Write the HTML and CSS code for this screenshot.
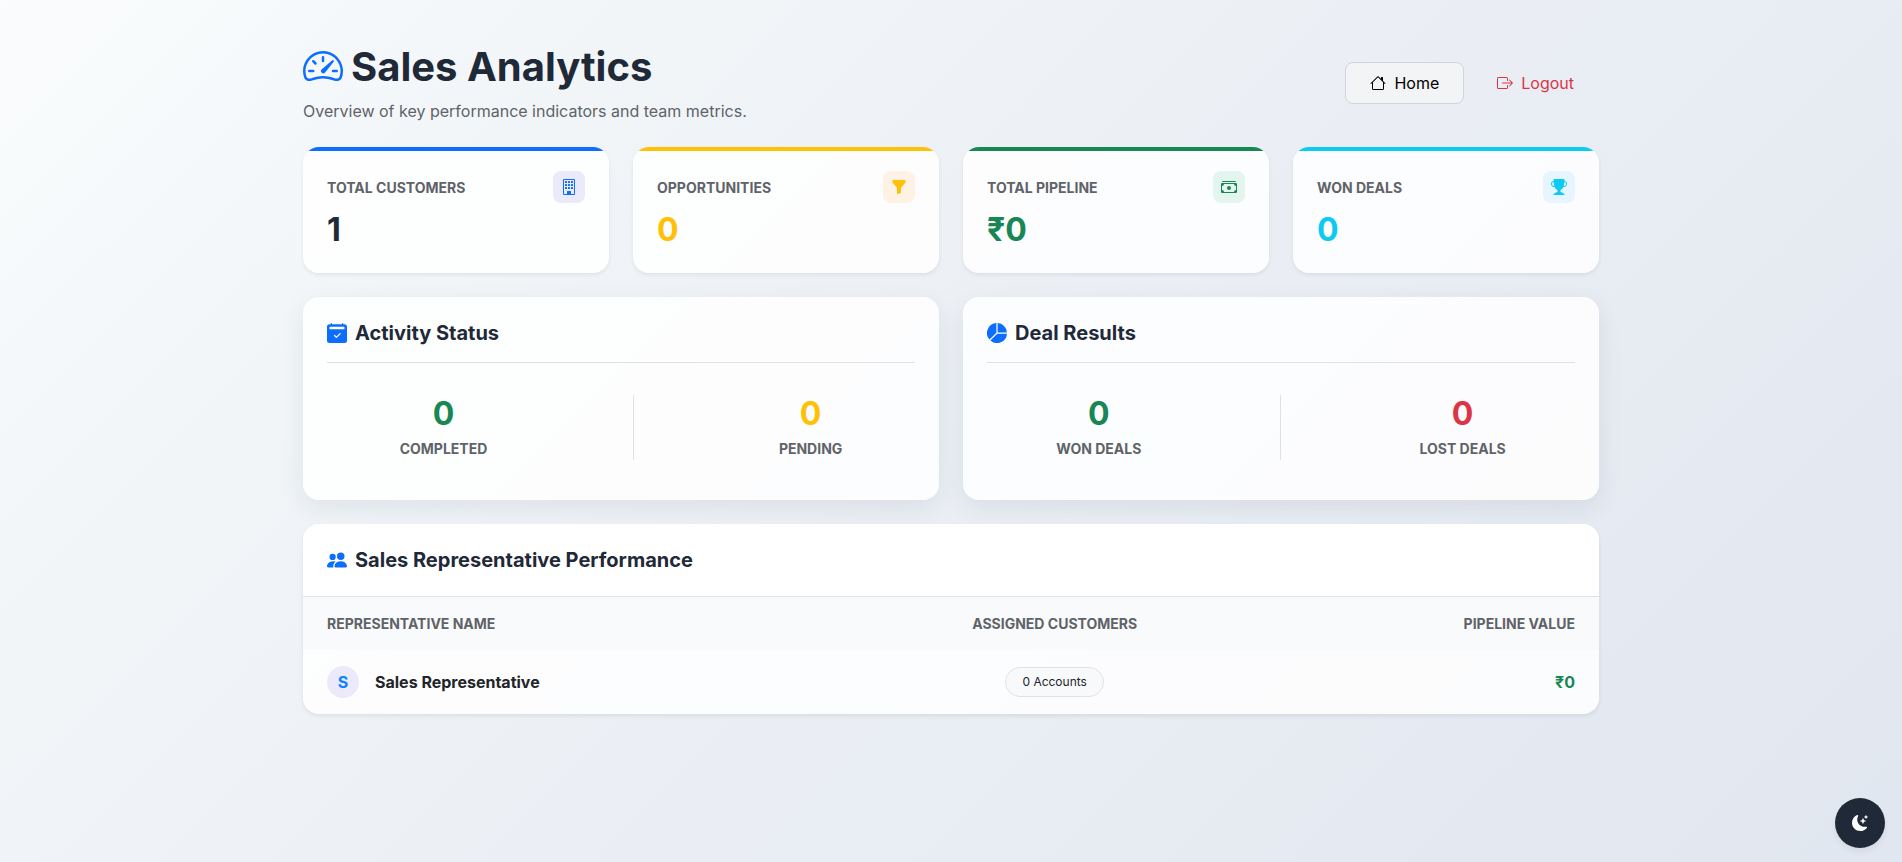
FILE: index.html
```html
<!DOCTYPE html>
<html lang="en">
<head>
<meta charset="utf-8">
<meta name="viewport" content="width=device-width, initial-scale=1">
<title>Sales Analytics</title>
<link rel="stylesheet" href="styles.css">
</head>
<body>
<main class="container">
  <header class="page-header">
    <div>
      <h1 class="page-title"><svg class="icon text-primary" viewBox="0 0 16 16" aria-hidden="true"><path d="M8 4a.5.5 0 0 1 .5.5V6a.5.5 0 0 1-1 0V4.5A.5.5 0 0 1 8 4M3.732 5.732a.5.5 0 0 1 .707 0l.915.914a.5.5 0 1 1-.708.708l-.914-.915a.5.5 0 0 1 0-.707M2 10a.5.5 0 0 1 .5-.5h1.586a.5.5 0 0 1 0 1H2.5A.5.5 0 0 1 2 10m9.5 0a.5.5 0 0 1 .5-.5h1.5a.5.5 0 0 1 0 1H12a.5.5 0 0 1-.5-.5m.754-4.246a.39.39 0 0 0-.527-.02L7.547 9.31a.91.91 0 1 0 1.302 1.258l3.434-4.297a.39.39 0 0 0-.029-.518z"/><path fill-rule="evenodd" d="M0 10a8 8 0 1 1 15.547 2.661c-.442 1.253-1.845 1.602-2.932 1.25C11.309 13.488 9.475 13 8 13c-1.474 0-3.31.488-4.615.911-1.087.352-2.49.003-2.932-1.25A8 8 0 0 1 0 10m8-7a7 7 0 0 0-6.603 9.329c.203.575.923.876 1.68.63C4.397 12.533 6.358 12 8 12s3.604.532 4.923.96c.757.245 1.477-.056 1.68-.631A7 7 0 0 0 8 3"/></svg>Sales Analytics</h1>
      <p class="page-subtitle">Overview of key performance indicators and team metrics.</p>
    </div>
    <nav class="page-nav">
      <a class="btn btn-light" href="#"><svg class="icon" viewBox="0 0 16 16" aria-hidden="true"><path d="M8.707 1.5a1 1 0 0 0-1.414 0L.646 8.146a.5.5 0 0 0 .708.708L2 8.207V13.5A1.5 1.5 0 0 0 3.5 15h9a1.5 1.5 0 0 0 1.5-1.5V8.207l.646.647a.5.5 0 0 0 .708-.708L13 5.793V2.5a.5.5 0 0 0-.5-.5h-1a.5.5 0 0 0-.5.5v1.293zM13 7.207V13.5a.5.5 0 0 1-.5.5h-9a.5.5 0 0 1-.5-.5V7.207l5-5z"/></svg>Home</a>
      <a class="btn btn-logout" href="#"><svg class="icon" viewBox="0 0 16 16" aria-hidden="true"><path fill-rule="evenodd" d="M10 12.5a.5.5 0 0 1-.5.5h-8a.5.5 0 0 1-.5-.5v-9a.5.5 0 0 1 .5-.5h8a.5.5 0 0 1 .5.5v2a.5.5 0 0 0 1 0v-2A1.5 1.5 0 0 0 9.5 2h-8A1.5 1.5 0 0 0 0 3.5v9A1.5 1.5 0 0 0 1.5 14h8a1.5 1.5 0 0 0 1.5-1.5v-2a.5.5 0 0 0-1 0z"/><path fill-rule="evenodd" d="M15.854 8.354a.5.5 0 0 0 0-.708l-3-3a.5.5 0 0 0-.708.708L14.293 7.5H5.5a.5.5 0 0 0 0 1h8.793l-2.147 2.146a.5.5 0 0 0 .708.708z"/></svg>Logout</a>
    </nav>
  </header>

  <section class="kpi-grid">
    <article class="kpi kpi-primary">
      <div class="kpi-head">
        <h2 class="label">Total Customers</h2>
        <span class="kpi-icon"><svg class="icon" viewBox="0 0 16 16" aria-hidden="true"><path d="M4 2.500a.5.5 0 0 1 .5-.5h1a.5.5 0 0 1 .5.5v1a.5.5 0 0 1-.5.5h-1a.5.5 0 0 1-.5-.5zm3 0a.5.5 0 0 1 .5-.5h1a.5.5 0 0 1 .5.5v1a.5.5 0 0 1-.5.5h-1a.5.5 0 0 1-.5-.5zm3.500-.5a.5.5 0 0 0-.5.5v1a.5.5 0 0 0 .5.5h1a.5.5 0 0 0 .5-.5v-1a.5.5 0 0 0-.5-.5zM4 5.500a.5.5 0 0 1 .5-.5h1a.5.5 0 0 1 .5.5v1a.5.5 0 0 1-.5.5h-1a.5.5 0 0 1-.5-.5zM7.500 5a.5.5 0 0 0-.5.5v1a.5.5 0 0 0 .5.5h1a.5.5 0 0 0 .5-.5v-1a.5.5 0 0 0-.5-.5zm2.500.5a.5.5 0 0 1 .5-.5h1a.5.5 0 0 1 .5.5v1a.5.5 0 0 1-.5.5h-1a.5.5 0 0 1-.5-.5zM4.500 8a.5.5 0 0 0-.5.5v1a.5.5 0 0 0 .5.5h1a.5.5 0 0 0 .5-.5v-1a.5.5 0 0 0-.5-.5zm2.500.5a.5.5 0 0 1 .5-.5h1a.5.5 0 0 1 .5.5v1a.5.5 0 0 1-.5.5h-1a.5.5 0 0 1-.5-.5zm3.500-.5a.5.5 0 0 0-.5.5v1a.5.5 0 0 0 .5.5h1a.5.5 0 0 0 .5-.5v-1a.5.5 0 0 0-.5-.5z"/><path d="M2 1a1 1 0 0 1 1-1h10a1 1 0 0 1 1 1v14a1 1 0 0 1-1 1H3a1 1 0 0 1-1-1zm11 0H3v14h3v-2.500a.5.5 0 0 1 .5-.5h3a.5.5 0 0 1 .5.5V15h3z"/></svg></span>
      </div>
      <p class="figure text-dark">1</p>
    </article>
    <article class="kpi kpi-warning">
      <div class="kpi-head">
        <h2 class="label">Opportunities</h2>
        <span class="kpi-icon"><svg class="icon" viewBox="0 0 16 16" aria-hidden="true"><path d="M1.500 1.500A.5.5 0 0 1 2 1h12a.5.5 0 0 1 .5.5v2a.5.5 0 0 1-.128.334L10 8.692V13.500a.5.5 0 0 1-.342.474l-3 1A.5.5 0 0 1 6 14.500V8.692L1.628 3.834A.5.5 0 0 1 1.500 3.500z"/></svg></span>
      </div>
      <p class="figure text-warning">0</p>
    </article>
    <article class="kpi kpi-success">
      <div class="kpi-head">
        <h2 class="label">Total Pipeline</h2>
        <span class="kpi-icon"><svg class="icon" viewBox="0 0 16 16" aria-hidden="true"><path d="M1 3a1 1 0 0 1 1-1h12a1 1 0 0 1 1 1zm7 8a2 2 0 1 0 0-4 2 2 0 0 0 0 4"/><path d="M0 5a1 1 0 0 1 1-1h14a1 1 0 0 1 1 1v8a1 1 0 0 1-1 1H1a1 1 0 0 1-1-1zm3 0a2 2 0 0 1-2 2v4a2 2 0 0 1 2 2h10a2 2 0 0 1 2-2V7a2 2 0 0 1-2-2z"/></svg></span>
      </div>
      <p class="figure text-success">₹0</p>
    </article>
    <article class="kpi kpi-info">
      <div class="kpi-head">
        <h2 class="label">Won Deals</h2>
        <span class="kpi-icon"><svg class="icon" viewBox="0 0 16 16" aria-hidden="true"><path d="M2.500.5A.5.5 0 0 1 3 0h10a.5.5 0 0 1 .5.5q0 .807-.034 1.536a3 3 0 1 1-1.133 5.890c-.79 1.865-1.878 2.777-2.833 3.011v2.173l1.425.356c.194.048.377.135.537.255L13.300 15.100a.5.5 0 0 1-.3.9H3a.5.5 0 0 1-.3-.9l1.838-1.379c.16-.12.343-.207.537-.255L6.500 13.110v-2.173c-.955-.234-2.043-1.146-2.833-3.012a3 3 0 1 1-1.132-5.890A33 33 0 0 1 2.500.5m.099 2.540a2 2 0 0 0 .72 3.935c-.333-1.050-.588-2.346-.72-3.935m10.083 3.935a2 2 0 0 0 .72-3.935c-.133 1.590-.388 2.885-.72 3.935"/></svg></span>
      </div>
      <p class="figure text-info">0</p>
    </article>
  </section>

  <section class="panel-grid">
    <article class="panel">
      <h2 class="section-title panel-title"><svg class="icon text-primary" viewBox="0 0 16 16" aria-hidden="true"><path d="M3.500 0a.5.5 0 0 1 .5.5V1h8V.5a.5.5 0 0 1 1 0V1h1a2 2 0 0 1 2 2v11a2 2 0 0 1-2 2H2a2 2 0 0 1-2-2V3a2 2 0 0 1 2-2h1V.5a.5.5 0 0 1 .5-.5m9.954 3H2.545c-.3 0-.545.224-.545.5v1c0 .276.244.5.545.5h10.910c.3 0 .545-.224.545-.5v-1c0-.276-.244-.5-.546-.5m-2.600 5.854a.5.5 0 0 0-.708-.708L7.500 10.793 6.354 9.646a.5.5 0 1 0-.708.708l1.500 1.500a.5.5 0 0 0 .708 0z"/></svg>Activity Status</h2>
      <div class="stats">
        <div class="stat">
          <p class="figure text-success">0</p>
          <p class="label">Completed</p>
        </div>
        <div class="stat-divider"></div>
        <div class="stat">
          <p class="figure text-warning">0</p>
          <p class="label">Pending</p>
        </div>
      </div>
    </article>
    <article class="panel">
      <h2 class="section-title panel-title"><svg class="icon text-primary" viewBox="0 0 16 16" aria-hidden="true"><path d="M15.985 8.500H8.207l-5.500 5.500a8 8 0 0 0 13.277-5.500zM2 13.292A8 8 0 0 1 7.500.015v7.778zM8.500.015V7.500h7.485A8 8 0 0 0 8.500.015"/></svg>Deal Results</h2>
      <div class="stats">
        <div class="stat">
          <p class="figure text-success">0</p>
          <p class="label">Won Deals</p>
        </div>
        <div class="stat-divider"></div>
        <div class="stat">
          <p class="figure text-danger">0</p>
          <p class="label">Lost Deals</p>
        </div>
      </div>
    </article>
  </section>

  <section class="table-card">
    <h2 class="section-title table-title"><svg class="icon text-primary" viewBox="0 0 16 16" aria-hidden="true"><path d="M7 14s-1 0-1-1 1-4 5-4 5 3 5 4-1 1-1 1zm4-6a3 3 0 1 0 0-6 3 3 0 0 0 0 6m-5.784 6A2.240 2.240 0 0 1 5 13c0-1.355.68-2.750 1.936-3.720A6.300 6.300 0 0 0 5 9c-4 0-5 3-5 4s1 1 1 1zM4.500 8a2.500 2.500 0 1 0 0-5 2.500 2.500 0 0 0 0 5"/></svg>Sales Representative Performance</h2>
    <table class="rep-table">
      <thead>
        <tr>
          <th class="label" scope="col">Representative Name</th>
          <th class="label cell-center" scope="col">Assigned Customers</th>
          <th class="label cell-end" scope="col">Pipeline Value</th>
        </tr>
      </thead>
      <tbody>
        <tr>
          <td><div class="rep"><span class="avatar">S</span><span>Sales Representative</span></div></td>
          <td class="cell-center"><span class="badge">0 Accounts</span></td>
          <td class="cell-end text-success">₹0</td>
        </tr>
      </tbody>
    </table>
  </section>
</main>

<button class="theme-toggle" type="button" aria-label="Toggle dark mode"><svg class="icon" viewBox="0 0 16 16" aria-hidden="true"><path d="M6 .278a.77.77 0 0 1 .08.858 7.200 7.200 0 0 0-.878 3.460c0 4.021 3.278 7.277 7.318 7.277q.792-.001 1.533-.16a.79.79 0 0 1 .81.316.73.73 0 0 1-.031.893A8.350 8.350 0 0 1 8.344 16C3.734 16 0 12.286 0 7.710 0 4.266 2.114 1.312 5.124.06A.75.75 0 0 1 6 .278"/><path d="M10.794 3.148a.217.217 0 0 1 .412 0l.387 1.162c.173.518.579.924 1.097 1.097l1.162.387a.217.217 0 0 1 0 .412l-1.162.387a1.730 1.730 0 0 0-1.097 1.097l-.387 1.162a.217.217 0 0 1-.412 0l-.387-1.162A1.730 1.730 0 0 0 9.310 6.593l-1.162-.387a.217.217 0 0 1 0-.412l1.162-.387a1.730 1.730 0 0 0 1.097-1.097zM13.863.099a.145.145 0 0 1 .274 0l.258.774c.115.346.386.617.732.732l.774.258a.145.145 0 0 1 0 .274l-.774.258a1.160 1.160 0 0 0-.732.732l-.258.774a.145.145 0 0 1-.274 0l-.258-.774a1.160 1.160 0 0 0-.732-.732l-.774-.258a.145.145 0 0 1 0-.274l.774-.258c.346-.115.617-.386.732-.732z"/></svg></button>
</body>
</html>
```
FILE: styles.css
```css
:root {
  --primary: #0d6efd;
  --warning: #ffc107;
  --success: #198754;
  --info: #0dcaf0;
  --danger: #dc3545;
  --dark: #1f2937;
  --muted: #5f6368;
  --border: #dee2e6;
}

*, *::before, *::after { box-sizing: border-box; }

h1, h2, p { margin: 0; }

body {
  margin: 0;
  min-height: 100vh;
  font-family: Inter, "Liberation Sans", sans-serif;
  font-size: 16px;
  line-height: 24px;
  color: #212529;
  background: linear-gradient(135deg, #fafcfd 0%, #f1f5f8 25%, #e8ecf3 65%, #e1e7f0 100%);
}

.text-primary { color: var(--primary); }
.text-warning { color: var(--warning); }
.text-success { color: var(--success); }
.text-info { color: var(--info); }
.text-danger { color: var(--danger); }
.text-dark { color: var(--dark); }

.icon {
  width: 1em;
  height: 1em;
  fill: currentColor;
  vertical-align: -0.125em;
}

.container {
  display: flex;
  flex-direction: column;
  gap: 24px;
  max-width: 1320px;
  margin: 0 auto;
  padding: 43px 12px 48px;
}

.page-header {
  display: flex;
  align-items: center;
  justify-content: space-between;
}

.page-title {
  margin-bottom: 8px;
  font-size: 40px;
  font-weight: 700;
  line-height: 48px;
  color: var(--dark);
}
.page-title .icon,
.section-title .icon { margin-right: 8px; }

.page-subtitle { color: var(--muted); }

.page-nav { display: flex; gap: 8px; }

.btn {
  display: flex;
  align-items: center;
  gap: 8px;
  padding: 8px 24px;
  border: 1px solid transparent;
  border-radius: 8px;
  text-decoration: none;
}
.btn-light {
  color: #000000;
  background: #f3f4f6;
  border-color: #d1d5db;
}
.btn-logout { color: var(--danger); }

.label {
  font-size: 14px;
  font-weight: 700;
  line-height: 21px;
  color: var(--muted);
  text-transform: uppercase;
}

.figure {
  font-size: 32px;
  font-weight: 700;
  line-height: 38px;
}

.kpi-grid {
  display: grid;
  grid-template-columns: repeat(4, 1fr);
  gap: 24px;
}

.kpi {
  padding: 20px 24px 24px;
  border-radius: 16px;
  overflow: hidden;
  background: rgba(255, 255, 255, 0.85);
  box-shadow: 0 2px 4px rgba(0, 0, 0, 0.07);
}
.kpi::before {
  content: "";
  display: block;
  height: 4px;
  margin: -20px -24px 20px;
  background: var(--accent);
}
.kpi-primary { --accent: var(--primary); --tint: #ebe9fa; }
.kpi-warning { --accent: var(--warning); --tint: #fdf2e4; }
.kpi-success { --accent: var(--success); --tint: #e3f5ee; }
.kpi-info { --accent: var(--info); --tint: #e7f6fe; }

.kpi-head {
  display: flex;
  align-items: center;
  justify-content: space-between;
  margin-bottom: 8px;
}

.kpi-icon {
  display: flex;
  align-items: center;
  justify-content: center;
  width: 32px;
  height: 32px;
  border-radius: 8px;
  color: var(--accent);
  background: var(--tint);
}

.panel-grid {
  display: grid;
  grid-template-columns: repeat(2, 1fr);
  gap: 24px;
}

.panel {
  padding: 24px;
  border-radius: 16px;
  background: rgba(255, 255, 255, 0.85);
  box-shadow: 0 8px 24px rgba(31, 41, 55, 0.08);
}

.section-title {
  font-size: 20px;
  font-weight: 700;
  line-height: 24px;
  color: var(--dark);
}

.panel-title {
  padding-bottom: 16px;
  margin-bottom: 24px;
  border-bottom: 1px solid var(--border);
  line-height: 25px;
}

.stats {
  display: flex;
  justify-content: space-around;
  padding: 8px 0 16px;
  min-height: 89px;
}
.stat { text-align: center; }
.stat .figure { margin-bottom: 5px; }
.stat-divider {
  width: 1px;
  background: var(--border);
}

.table-card {
  border-radius: 16px;
  overflow: hidden;
  background: rgba(255, 255, 255, 0.85);
  box-shadow: 0 2px 4px rgba(0, 0, 0, 0.08);
}

.table-title {
  padding: 24px;
  background: #ffffff;
  border-bottom: 1px solid var(--border);
}

.rep-table {
  width: 100%;
  border-collapse: collapse;
}
.rep-table th,
.rep-table td {
  padding: 16px 24px;
  text-align: left;
  font-weight: 700;
}
.rep-table thead { background: #f9fafc; }
.rep-table .cell-center { text-align: center; }
.rep-table .cell-end { text-align: right; }

.rep {
  display: flex;
  align-items: center;
  gap: 16px;
}

.avatar {
  display: flex;
  align-items: center;
  justify-content: center;
  width: 32px;
  height: 32px;
  border-radius: 50%;
  color: #0a84ff;
  background: #ebe9fa;
}

.badge {
  display: inline-block;
  padding: 8px 16px;
  border: 1px solid var(--border);
  border-radius: 16px;
  font-size: 12px;
  font-weight: 400;
  line-height: 12px;
  background: #f8f9fa;
  vertical-align: middle;
}

.theme-toggle {
  position: fixed;
  right: 17px;
  bottom: 14px;
  display: flex;
  align-items: center;
  justify-content: center;
  width: 50px;
  height: 50px;
  padding: 0;
  border: 0;
  border-radius: 50%;
  font-size: 16px;
  color: #ffffff;
  background: var(--dark);
  box-shadow: 0 4px 6px rgba(0, 0, 0, 0.06);
}
```
